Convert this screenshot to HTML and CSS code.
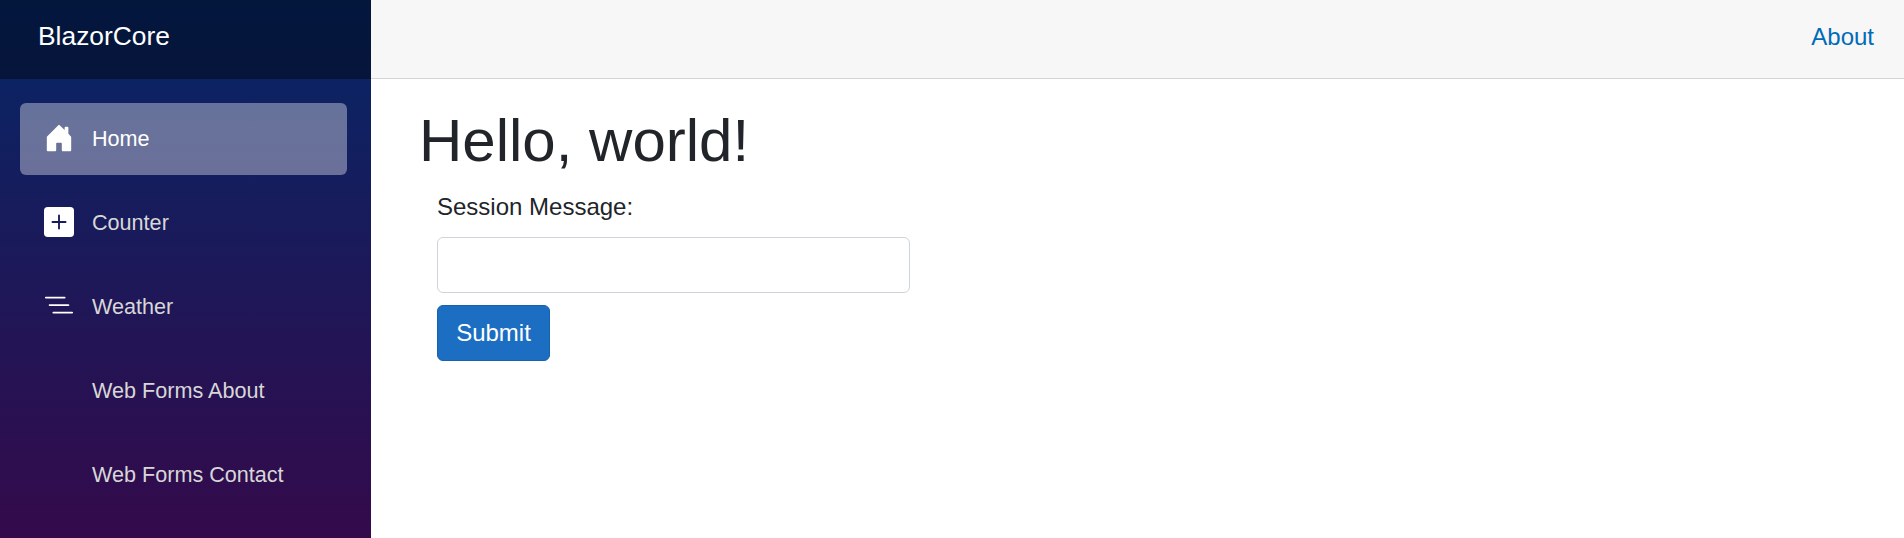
FILE: index.html
```html
<!DOCTYPE html>
<html lang="en">
<head>
<meta charset="utf-8">
<title>Home</title>
<link rel="stylesheet" href="styles.css">
</head>
<body>
<div class="page">
  <div class="sidebar">
    <div class="brand-row"><a class="brand">BlazorCore</a></div>
    <nav class="nav">
      <a class="nav-link active">
        <svg class="icon" viewBox="0 0 16 16"><path d="M6.5 14.5v-3.505c0-.245.25-.495.5-.495h2c.25 0 .5.25.5.5v3.5a.5.5 0 0 0 .5.5h4a.5.5 0 0 0 .5-.5v-7a.5.5 0 0 0-.146-.354L13 5.793V2.5a.5.5 0 0 0-.5-.5h-1a.5.5 0 0 0-.5.5v1.293L8.354 1.146a.5.5 0 0 0-.708 0l-6 6A.5.5 0 0 0 1.5 7.5v7a.5.5 0 0 0 .5.5h4a.5.5 0 0 0 .5-.5Z"/></svg>
        <span>Home</span>
      </a>
      <a class="nav-link">
        <svg class="icon" viewBox="0 0 16 16"><path d="M2 0a2 2 0 0 0-2 2v12a2 2 0 0 0 2 2h12a2 2 0 0 0 2-2V2a2 2 0 0 0-2-2H2zm6.5 4.5v3h3a.5.5 0 0 1 0 1h-3v3a.5.5 0 0 1-1 0v-3h-3a.5.5 0 0 1 0-1h3v-3a.5.5 0 0 1 1 0z"/></svg>
        <span>Counter</span>
      </a>
      <a class="nav-link">
        <svg class="icon" viewBox="0 0 16 16"><path d="M4.5 11.5A.5.5 0 0 1 5 11h10a.5.5 0 0 1 0 1H5a.5.5 0 0 1-.5-.5zm-2-4A.5.5 0 0 1 3 7h10a.5.5 0 0 1 0 1H3a.5.5 0 0 1-.5-.5zm-2-4A.5.5 0 0 1 1 3h10a.5.5 0 0 1 0 1H1a.5.5 0 0 1-.5-.5z"/></svg>
        <span>Weather</span>
      </a>
      <a class="nav-link"><span class="icon"></span><span>Web Forms About</span></a>
      <a class="nav-link"><span class="icon"></span><span>Web Forms Contact</span></a>
    </nav>
  </div>
  <main class="main">
    <div class="top-row"><a class="about">About</a></div>
    <article class="content">
      <h1 class="title">Hello, world!</h1>
      <form class="form">
        <label class="label" for="message">Session Message:</label>
        <input class="input" id="message" type="text">
        <button class="submit" type="button">Submit</button>
      </form>
    </article>
  </main>
</div>
</body>
</html>
```

FILE: styles.css
```css
*, *::before, *::after { box-sizing: border-box; }
body {
  margin: 0;
  font-family: "Liberation Sans", Arial, sans-serif;
  font-size: 24px;
  line-height: 36px;
  color: #212529;
  background: #fff;
}
.page { display: flex; height: 538px; overflow: hidden; }
.sidebar {
  width: 371px;
  flex: none;
  background: linear-gradient(180deg, #052767 0, #3a0647 610px);
}
.brand-row {
  height: 79px;
  padding: 16px 0 0 38px;
  background: rgba(0, 0, 0, 0.4);
}
.brand { display: block; font-size: 26.4px; line-height: 40px; color: #fff; }
.nav {
  display: flex;
  flex-direction: column;
  gap: 12px;
  padding: 24px 24px 0 20px;
  font-size: 21.6px;
}
.nav-link {
  display: flex;
  align-items: center;
  gap: 18px;
  height: 72px;
  padding: 0 0 1px 24px;
  border-radius: 6px;
  line-height: 36px;
  color: #d7d7d7;
}
.nav-link.active { background: rgba(255, 255, 255, 0.37); color: #fff; }
.icon { width: 30px; height: 30px; flex: none; fill: #fff; margin-top: -1px; }
.main { flex: 1; }
.top-row {
  display: flex;
  justify-content: flex-end;
  height: 79px;
  padding: 19px 30px 0 0;
  background: #f7f7f7;
  border-bottom: 1px solid #d6d5d5;
}
.about { color: #006bb7; }
.content { padding: 26px 36px 0 48px; }
.title { margin: 0 0 12px; font-size: 60px; font-weight: 400; line-height: 72px; }
.form { display: flex; flex-direction: column; align-items: flex-start; padding-left: 18px; }
.label { margin-bottom: 12px; }
.input {
  width: 473px;
  height: 56px;
  margin-bottom: 12px;
  padding: 9px 18px;
  font: inherit;
  border: 1px solid #ced4da;
  border-radius: 6px;
}
.submit {
  width: 113px;
  height: 56px;
  padding: 0;
  font: inherit;
  color: #fff;
  background: #1b6ec2;
  border: 1px solid #1861ac;
  border-radius: 6px;
}
```
